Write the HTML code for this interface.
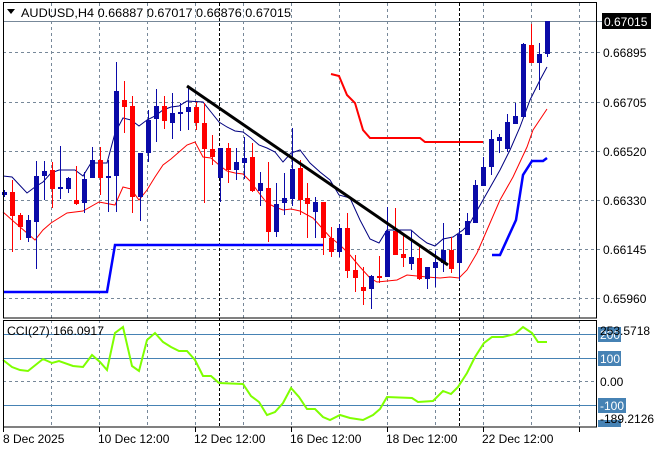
<!DOCTYPE html>
<html><head><meta charset="utf-8"><style>
html,body{margin:0;padding:0;background:#fff;width:660px;height:450px;overflow:hidden}
svg{display:block}
text{font-family:"Liberation Sans",sans-serif;font-size:12px;fill:#000}
</style></head><body>
<svg width="660" height="450" viewBox="0 0 660 450" xmlns="http://www.w3.org/2000/svg">
<g stroke="#778899" stroke-width="1" stroke-dasharray="3,3" fill="none">
<path d="M51.5 3V318M99.5 3V318M147.5 3V318M195.5 3V318M243.5 3V318M291.5 3V318M339.5 3V318M387.5 3V318M435.5 3V318M483.5 3V318M531.5 3V318M579.5 3V318"/>
<path d="M51.5 320V427M99.5 320V427M147.5 320V427M195.5 320V427M243.5 320V427M291.5 320V427M339.5 320V427M387.5 320V427M435.5 320V427M483.5 320V427M531.5 320V427M579.5 320V427"/>
<path d="M3 52.5H602M3 102.5H602M3 151.5H602M3 200.5H602M3 249.5H602M3 298.5H602"/>
<path d="M3 381.5H596"/>
</g>
<path d="M3 21.5H602" stroke="#778899" stroke-width="1"/>
<g stroke="#000" stroke-width="1" stroke-dasharray="3,2"><path d="M219.5 3V427M459.5 3V427"/></g>
<g stroke="#4682b4" stroke-width="1"><path d="M3 334.5H596M3 358.5H596M3 405.5H596"/></g>
<polyline fill="none" stroke="#0000ff" stroke-width="2.5" points="3,292 107,292 115,245 323,245"/>
<polyline fill="none" stroke="#0000ff" stroke-width="2.5" points="492,255 500,255 516,220 523,175 532,161 543,161 547,158"/>
<polyline fill="none" stroke="#ff0000" stroke-width="2" points="331,74 339,76 347,95 355,103 363,130 370,138 420,138 425,142 483,142"/>
<polyline fill="none" stroke="#000080" stroke-width="1" points="3,176 12,177 27,193 35,187 43,182 51,173 59,170 75,170 83,176 91,163 107,163 115,133 123,118 131,120 139,126 147,120 155,116 163,110 171,107 179,106 187,101 203,102 211,112 219,122 227,127 235,131 243,132 251,138 259,145 267,148 275,152 283,162 291,153 300,150 310,163 320,172 330,180 339,195 350,198 360,220 370,239 379,243 387,230 411,230 419,237 427,243 435,246 443,239 453,237 463,230 470,223 483,200 500,170 510,150 520,127 530,100 540,80 547,67"/>
<polyline fill="none" stroke="#ff0000" stroke-width="1" points="3,212 12,220 35,240 43,230 51,223 67,213 83,211 99,202 115,205 123,187 131,189 139,200 147,190 155,177 163,165 171,159 179,152 187,145 195,142 203,157 211,158 219,165 227,171 235,173 243,174 251,182 259,193 267,203 275,207 283,210 291,209 300,211 313,218 330,237 340,245 350,255 360,267 370,278 377,282 397,280 407,275 427,277 440,278 450,277 459,278 467,270 477,253 487,230 500,200 513,177 527,147 533,130 547,109"/>
<g id="c"></g>
<line x1="187" y1="86" x2="448" y2="265" stroke="#000" stroke-width="3"/>
<polyline fill="none" stroke="#7fff00" stroke-width="2" points="3,360 12,367 20,370 28,371 43,359 52,363 59,361 73,366 83,367 92,355 100,362 107,370 115,333 123,327 132,366 139,371 147,340 155,333 163,342 171,347 179,351 187,351 195,360 203,376 211,376 219,383 243,384 251,396 259,402 267,415 275,412 283,403 291,388 299,397 307,409 315,409 323,417 330,420 340,415 350,418 363,420 373,415 380,409 387,397 412,398 418,402 433,401 443,391 451,394 458,387 467,373 475,357 484,343 492,337 503,337 515,334 523,327 532,333 538,342 547,342"/>
<rect x="3.5" y="2.5" width="593" height="315.5" fill="none" stroke="#000"/>
<rect x="3.5" y="320.5" width="593" height="106.5" fill="none" stroke="#000"/>
<g stroke="#000"><path d="M3.5 427V432M99.5 427V432M195.5 427V432M291.5 427V432M387.5 427V432M483.5 427V432M579.5 427V432"/></g>
<path d="M7 9H15L11 14Z" fill="#000"/>
<text x="21" y="17" textLength="270" lengthAdjust="spacingAndGlyphs">AUDUSD,H4  0.66887 0.67017 0.66876 0.67015</text>
<text x="7" y="335" textLength="97" lengthAdjust="spacingAndGlyphs">CCI(27) 166.0917</text>
<rect x="602" y="13" width="49" height="16" fill="#000"/>
<text x="604" y="26" style="fill:#fff">0.67015</text>
<text x="603" y="57">0.66895</text>
<text x="603" y="107">0.66705</text>
<text x="603" y="156">0.66520</text>
<text x="603" y="205">0.66330</text>
<text x="603" y="254">0.66145</text>
<text x="603" y="303">0.65960</text>
<g fill="#4682b4"><rect x="598" y="327" width="23" height="15"/><rect x="598" y="351" width="23" height="15"/><rect x="598" y="398" width="28" height="15"/><rect x="598" y="420" width="23" height="7"/></g>
<text x="600" y="339" style="fill:#fff">200</text>
<text x="600" y="363" style="fill:#fff">100</text>
<text x="600" y="410" style="fill:#fff">-100</text>
<text x="600" y="335">253.5718</text>
<text x="600" y="386">0.00</text>
<text x="600" y="423">-189.2126</text>
<text x="3" y="443">8 Dec 2025</text>
<text x="98" y="443">10 Dec 12:00</text>
<text x="194" y="443">12 Dec 12:00</text>
<text x="290" y="443">16 Dec 12:00</text>
<text x="386" y="443">18 Dec 12:00</text>
<text x="482" y="443">22 Dec 12:00</text>
</svg>
<script>
var d=[
[4,'b',190,197,192,195],[12,'r',180,252,192,216],[20,'r',213,240,215,227],[28,'b',215,242,220,238],[36,'b',161,269,176,222],[44,'b',161,200,171,176],[52,'r',162,208,170,189],[60,'b',146,199,187,189],[68,'b',177,193,178,189],[76,'r',166,205,200,204],[84,'b',172,213,179,203],[92,'b',147,178,160,178],[100,'r',147,195,160,178],[108,'b',160,212,176,178],[116,'b',62,212,91,176],[124,'r',81,133,100,107],[132,'r',96,213,106,197],[140,'b',153,221,153,197],[148,'b',110,162,120,153],[156,'b',89,142,106,119],[164,'r',96,129,106,121],[172,'b',93,139,113,123],[180,'b',103,131,112,113],[188,'b',86,130,107,112],[196,'r',102,130,107,123],[204,'r',103,203,123,149],[212,'r',135,165,149,157],[220,'b',148,202,148,178],[228,'r',143,183,148,170],[236,'b',148,180,162,170],[244,'b',137,179,158,163],[252,'r',143,192,157,191],[260,'b',172,206,183,191],[268,'r',162,242,188,232],[276,'b',183,237,204,232],[284,'b',173,215,198,203],[292,'b',128,206,169,199],[300,'r',160,215,168,200],
[307,'r',183,238,198,204],[315,'b',197,238,202,212],[323,'r',202,255,202,238],[331,'r',227,257,238,252],[339,'b',224,257,228,252],[347,'r',213,278,228,271],[355,'r',255,292,270,278],[363,'r',267,305,287,291],[371,'b',275,309,276,289],[379,'r',256,283,276,278],[387,'b',207,277,231,277],[395,'r',208,255,231,255],[403,'r',235,267,254,258],[411,'b',231,270,257,264],[419,'r',245,280,258,279],[427,'b',267,289,267,279],[435,'b',251,287,262,268],[443,'b',223,272,250,263],[451,'r',237,273,250,269],[459,'b',229,280,234,263],[467,'b',213,235,221,235],[475,'b',180,223,185,223],[483,'b',157,186,167,186],[491,'b',130,175,139,167],[499,'b',134,153,137,141],[507,'b',114,152,122,149],[515,'b',103,124,116,124],[523,'b',43,117,44,117],[531,'r',24,63,45,63],[539,'b',43,90,54,63],[547,'b',21,57,21,54]];
var s='';d.forEach(function(c){var col=c[1]=='b'?'#0a0aa8':'#ff0000';s+='<line x1="'+(c[0]+.5)+'" y1="'+c[2]+'" x2="'+(c[0]+.5)+'" y2="'+c[3]+'" stroke="'+col+'" stroke-width="1"/>'+'<rect x="'+(c[0]-2)+'" y="'+c[4]+'" width="5" height="'+Math.max(2,c[5]-c[4])+'" fill="'+col+'"/>';});
document.getElementById('c').innerHTML=s;
</script>
</body></html>
